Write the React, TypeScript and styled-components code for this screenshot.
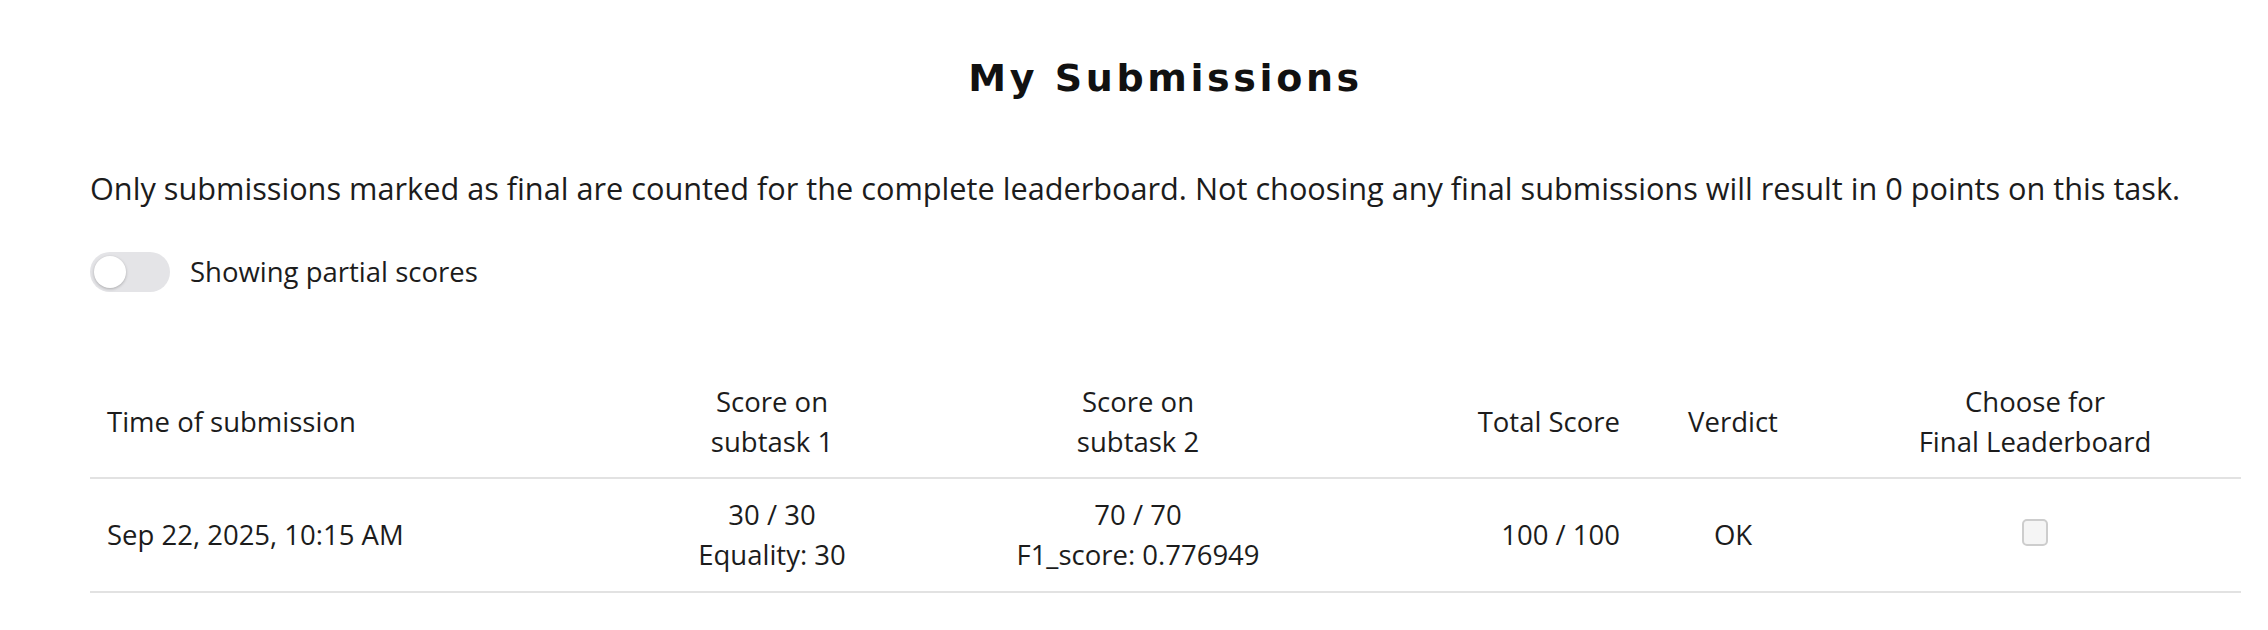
import React from "react";
import styled, { createGlobalStyle } from "styled-components";

const Global = createGlobalStyle`
  html, body { margin: 0; padding: 0; background: #ffffff; }
  body { font-family: "Open Sans", "Noto Sans", sans-serif; color: #1c1c1c; }
`;

const Page = styled.main`
  padding: 0 27px 40px 90px;
  display: flex;
  flex-direction: column;
`;

const Title = styled.h1`
  margin: 54px 0 0;
  font-family: "DejaVu Sans", "Liberation Sans", sans-serif;
  font-weight: 700;
  font-size: 38px;
  line-height: 48px;
  letter-spacing: 3.6px;
  text-align: center;
  color: #111111;
`;

const Note = styled.p`
  margin: 66px 0 0;
  font-size: 30.7px;
  line-height: 40px;
  color: #1c1c1c;
`;

const ToggleRow = styled.label`
  margin-top: 44px;
  display: flex;
  align-items: center;
  gap: 20px;
  font-size: 27.5px;
  line-height: 40px;
  cursor: pointer;
`;

const Track = styled.span<{ $on: boolean }>`
  position: relative;
  width: 80px;
  height: 40px;
  border-radius: 20px;
  background: ${(p) => (p.$on ? "#4f46e5" : "#e4e4e7")};
  flex: none;
`;

const Knob = styled.span<{ $on: boolean }>`
  position: absolute;
  top: 4px;
  left: ${(p) => (p.$on ? "43px" : "4px")};
  width: 32px;
  height: 32px;
  border-radius: 50%;
  background: #ffffff;
  box-shadow: 0 1px 3px rgba(0, 0, 0, 0.25);
`;

const Table = styled.table`
  margin-top: 74px;
  width: 2151px;
  border-collapse: collapse;
  table-layout: fixed;
  font-size: 27.5px;
  line-height: 40px;
`;

const Th = styled.th<{ $align?: "left" | "center" | "right" }>`
  padding: 16px 17px 15px;
  font-weight: 400;
  text-align: ${(p) => p.$align ?? "center"};
  vertical-align: middle;
  border-bottom: 2px solid #e2e2e2;
  color: #1c1c1c;
`;

const Td = styled.td<{ $align?: "left" | "center" | "right" }>`
  padding: 16px 17px;
  text-align: ${(p) => p.$align ?? "center"};
  vertical-align: middle;
  border-bottom: 2px solid #e2e2e2;
  color: #1c1c1c;
`;

const Line = styled.div``;

const Check = styled.span`
  display: inline-block;
  box-sizing: border-box;
  width: 26px;
  height: 27px;
  border: 2px solid #cdcdcd;
  border-radius: 5px;
  background: #f5f5f5;
  vertical-align: middle;
  margin-top: -10px;
`;

export default function App() {
  const [on, setOn] = React.useState(false);
  return (
    <>
      <Global />
      <Page>
        <Title>My Submissions</Title>
        <Note>
          Only submissions marked as final are counted for the complete leaderboard. Not choosing any final
          submissions will result in 0 points on this task.
        </Note>
        <ToggleRow onClick={() => setOn(!on)}>
          <Track $on={on}>
            <Knob $on={on} />
          </Track>
          Showing partial scores
        </ToggleRow>
        <Table>
          <colgroup>
            <col style={{ width: 510 }} />
            <col style={{ width: 344 }} />
            <col style={{ width: 388 }} />
            <col style={{ width: 305 }} />
            <col style={{ width: 192 }} />
            <col style={{ width: 412 }} />
          </colgroup>
          <thead>
            <tr>
              <Th $align="left">Time of submission</Th>
              <Th>
                <Line>Score on</Line>
                <Line>subtask 1</Line>
              </Th>
              <Th>
                <Line>Score on</Line>
                <Line>subtask 2</Line>
              </Th>
              <Th $align="right">Total Score</Th>
              <Th>Verdict</Th>
              <Th>
                <Line>Choose for</Line>
                <Line>Final Leaderboard</Line>
              </Th>
            </tr>
          </thead>
          <tbody>
            <tr>
              <Td $align="left">Sep 22, 2025, 10:15 AM</Td>
              <Td>
                <Line>30 / 30</Line>
                <Line>Equality: 30</Line>
              </Td>
              <Td>
                <Line>70 / 70</Line>
                <Line>F1_score: 0.776949</Line>
              </Td>
              <Td $align="right">100 / 100</Td>
              <Td>OK</Td>
              <Td>
                <Check />
              </Td>
            </tr>
          </tbody>
        </Table>
      </Page>
    </>
  );
}
